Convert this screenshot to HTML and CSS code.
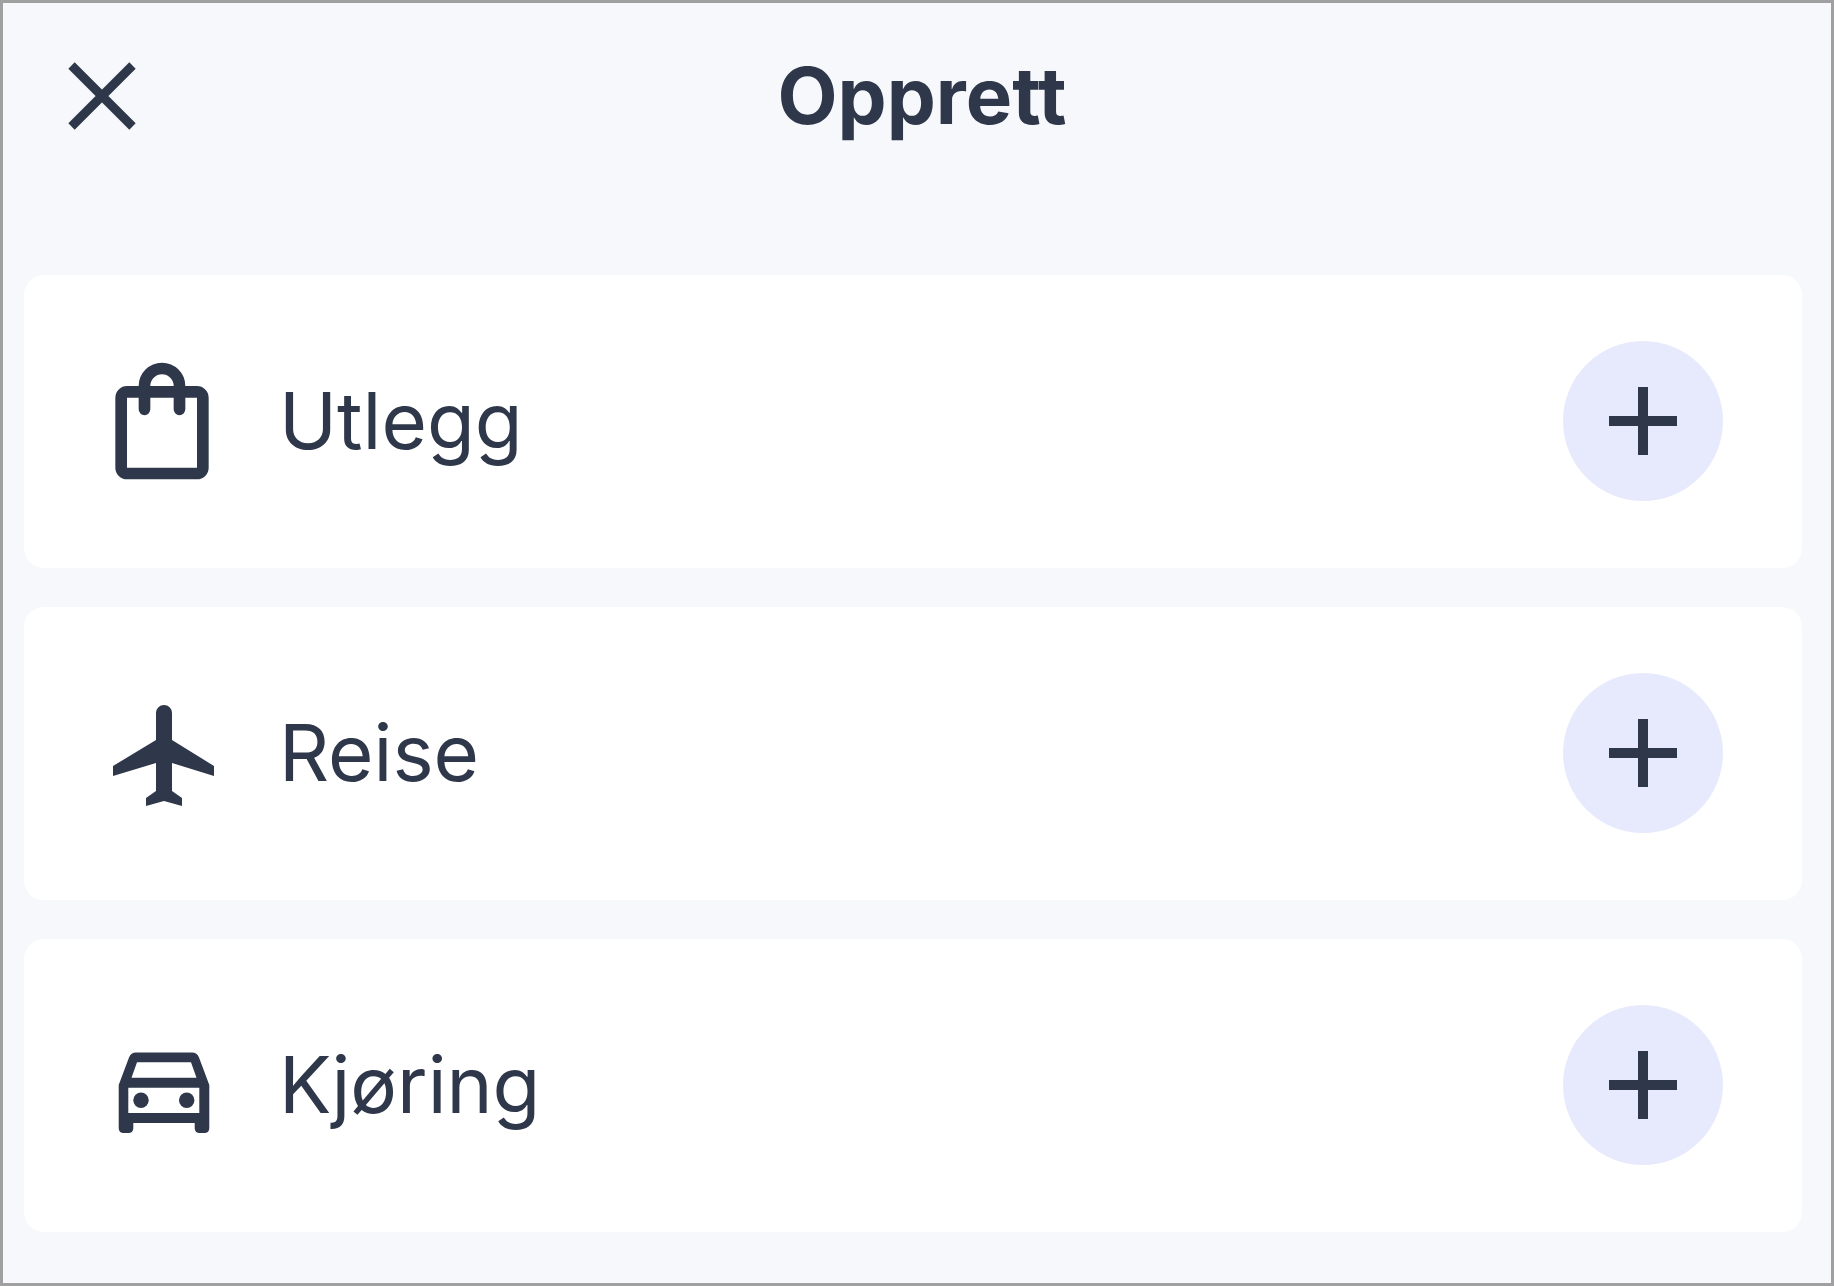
FILE: index.html
```html
<!DOCTYPE html>
<html lang="no">
<head>
    <meta charset="UTF-8">
    <meta name="viewport" content="width=device-width, initial-scale=1.0">
    <title>Opprett</title>
    <link rel="stylesheet" href="styles.css">
</head>
<body>
    <header class="header">
        <button type="button" class="close-button" aria-label="Lukk">
            <svg class="close-icon" viewBox="0 0 68 68" aria-hidden="true">
                <path d="M3.5 3.5l61 61M64.5 3.5l-61 61"/>
            </svg>
        </button>
        <h1 class="title">Opprett</h1>
    </header>

    <main>
        <ul class="card-list">
            <li class="card">
                <svg class="card-icon" viewBox="0 0 24 24" aria-hidden="true">
                    <path class="outline" d="M6 7h12a1 1 0 0 1 1 1v12a1 1 0 0 1-1 1H6a1 1 0 0 1-1-1V8a1 1 0 0 1 1-1z"/>
                    <path class="outline" d="M9 10V6a3 3 0 0 1 6 0v4"/>
                </svg>
                <span class="card-label" id="utlegg">Utlegg</span>
                <button type="button" class="add-button" aria-label="Legg til" aria-describedby="utlegg">
                    <svg class="add-icon" viewBox="0 0 68 68" aria-hidden="true"><path d="M34 0v68M0 34h68"/></svg>
                </button>
            </li>
            <li class="card">
                <svg class="card-icon" viewBox="0 0 140 140" aria-hidden="true">
                    <path d="M64 30a8 8 0 0 1 16 0v27l42 26v10L80 80v28l10 7v8l-18-5-18 5v-8l10-7V80L21 93V83l43-26z"/>
                </svg>
                <span class="card-label" id="reise">Reise</span>
                <button type="button" class="add-button" aria-label="Legg til" aria-describedby="reise">
                    <svg class="add-icon" viewBox="0 0 68 68" aria-hidden="true"><path d="M34 0v68M0 34h68"/></svg>
                </button>
            </li>
            <li class="card">
                <svg class="card-icon" viewBox="0 0 140 140" aria-hidden="true">
                    <path fill-rule="evenodd" d="M44 37.5h56q5 0 7 5l10.300 27.500v43q0 5-5 5h-4.600q-5 0-5-5v-5H41.300v5q0 5-5 5h-4.600q-5 0-5-5V70L37 42.500q2-5 7-5zM45 47.300L39.500 62.700h65L99 47.300zM36.300 72.700V98h71V72.700z"/>
                    <circle cx="49" cy="85.300" r="7.700"/>
                    <circle cx="94.700" cy="85.300" r="7.700"/>
                </svg>
                <span class="card-label" id="kjoring">Kjøring</span>
                <button type="button" class="add-button" aria-label="Legg til" aria-describedby="kjoring">
                    <svg class="add-icon" viewBox="0 0 68 68" aria-hidden="true"><path d="M34 0v68M0 34h68"/></svg>
                </button>
            </li>
        </ul>
    </main>
</body>
</html>
```
FILE: styles.css
```css
* {
    box-sizing: border-box;
}
body {
    font-family: Inter, Roboto, sans-serif;
    background-color: #f6f8fc;
    color: #2f384a;
    margin: 0;
    padding: 0 29px 40px 21px;
    min-height: 100vh;
    border: 3px solid #a0a0a0;
}
.header {
    display: grid;
    grid-template-columns: 1fr auto 1fr;
    align-items: center;
    padding: 43px 20px 0 38px;
    margin-bottom: 129px;
}
button {
    display: flex;
    align-items: center;
    justify-content: center;
    border: none;
    padding: 0;
    color: inherit;
    cursor: pointer;
}
.close-button {
    width: 80px;
    height: 80px;
    background: none;
}
.close-icon,
.add-icon {
    width: 68px;
    height: 68px;
    fill: none;
    stroke: currentColor;
    stroke-width: 10;
}
.close-icon {
    stroke-width: 9;
}
.title {
    margin: 0;
    font-size: 78px;
    line-height: 100px;
    font-weight: 700;
}
.card-list {
    display: flex;
    flex-direction: column;
    gap: 39px;
    list-style: none;
    margin: 0;
    padding: 0;
}
.card {
    display: flex;
    align-items: center;
    gap: 47px;
    min-height: 293px;
    padding: 0 79px 2px 68px;
    background-color: white;
    border-radius: 20px;
}
.card-icon {
    flex: none;
    width: 140px;
    height: 140px;
    fill: currentColor;
}
.outline {
    fill: none;
    stroke: currentColor;
    stroke-width: 2;
    stroke-linecap: round;
}
.card-label {
    flex: 1;
    font-size: 78px;
    line-height: 100px;
}
.add-button {
    flex: none;
    width: 160px;
    height: 160px;
    border-radius: 50%;
    background-color: #e6eafc;
}
.add-button:hover {
    background-color: #d9dffa;
}
```
